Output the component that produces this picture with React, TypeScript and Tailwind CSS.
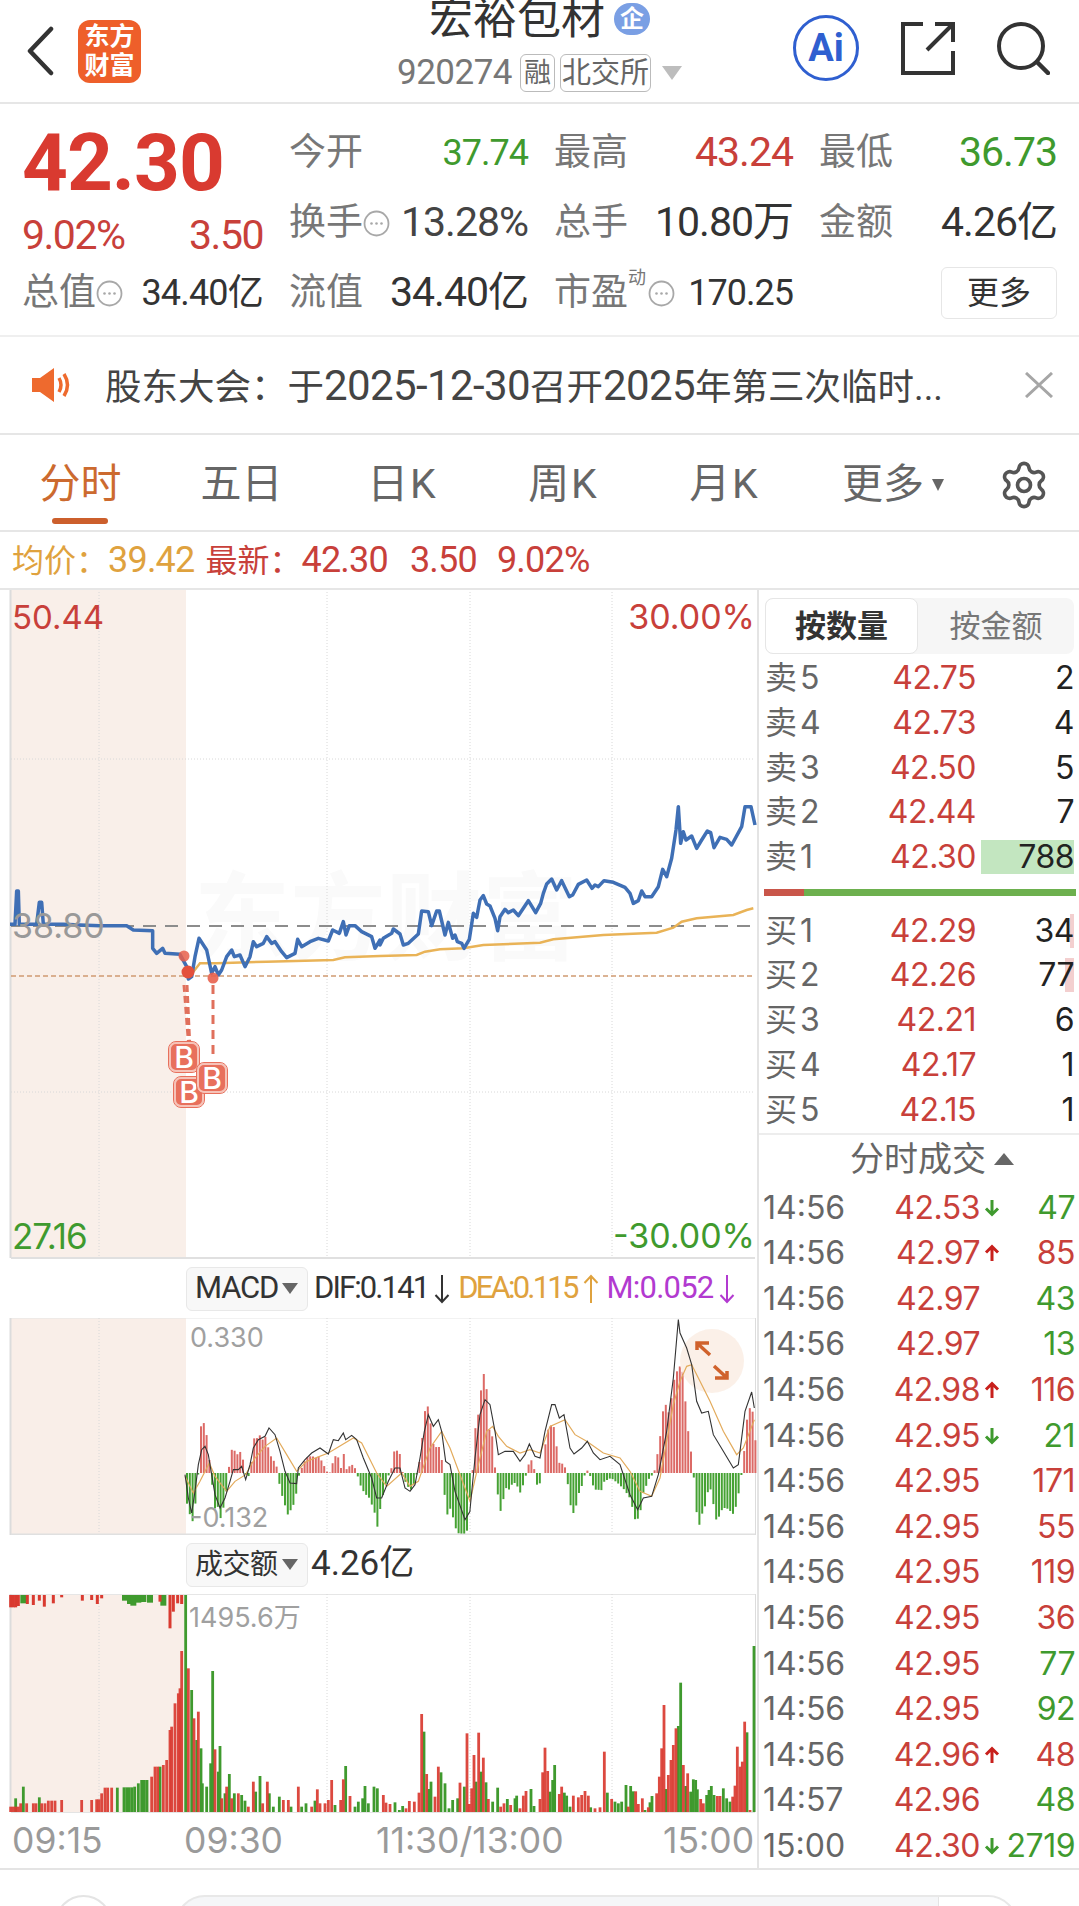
import { Settings } from "lucide-react";

const RED = "#c8403a";
const GREEN = "#3f9a2e";
const GOLD = "#dfa23e";

// traced from the chart, flat x,y pairs at 3x of the crop origin
const toPts = (flat: number[], ox: number, oy: number) => {
  const out: string[] = [];
  for (let i = 0; i < flat.length; i += 2) {
    out.push(`${ox + flat[i] / 3},${oy + flat[i + 1] / 3}`);
  }
  return out.join(" ");
};

const PRICE_A = [30,433,45,433,50,333,55,333,58,433,110,433,118,367,125,367,130,433,160,433,190,433,240,435,300,437,380,437,400,450,458,452,458,505,470,520,488,505,495,520,540,523,560,560,565,597,575,590,585,530,597,475,620,510,635,580,645,560,655,585,665,570,680,530,695,510,703,530,720,525,735,560,750,530,760,485,770,500,790,490,800,470,815,490,825,485,845,515,860,533,885,520,893,478,905,500,930,485,955,475,985,483,998,450,1018,460,1030,425,1038,465,1048,437,1065,437,1085,455,1115,470,1125,505,1140,480];
const PRICE_B = [0,495,10,475,35,460,40,447,60,462,70,495,85,490,115,462,125,393,145,395,155,437,170,393,178,393,195,465,205,427,218,475,225,465,232,485,245,490,252,505,268,478,280,400,290,412,300,360,310,347,320,372,330,378,345,415,353,452,360,410,375,388,385,398,400,390,415,407,445,362,467,398,482,370,490,340,500,312,515,297,530,330,545,302,568,350,578,345,595,313,620,300,636,325,645,315,655,320,672,302,700,307,735,322,750,340,760,370,775,362,785,333,795,350,815,350,835,320,848,268,860,290,875,235,888,150,895,80,902,190,910,155,918,180,935,168,950,205,965,180,982,153,992,158,1002,203,1020,172,1040,178,1055,195,1085,140,1095,80,1113,80,1125,135];
const AVG_A = [580,575,600,550,650,550,800,545,1000,540,1035,532,1140,528];
const AVG_B = [0,528,110,525,135,515,180,508,250,505,310,495,480,488,520,478,670,465,830,458,880,443,905,425,950,415,1060,405,1100,390,1120,385];

const DIF_A = [15,470,25,540,35,585,45,520,55,440,65,395,75,385,85,410,95,470,105,530,120,570,135,540,150,490,160,455,175,455,185,445,197,485,210,440,220,390,235,365,255,355,267,330,285,350,300,400,315,460,330,495,350,497,355,450,375,425,395,405,420,390,445,408,460,365,475,368,490,345,497,365,515,352,530,365,550,420,575,480,590,540,605,540,625,490,645,450,660,450,675,510,690,520,705,500,720,420,733,340,745,290,760,325,775,305,785,340,797,430,810,440,825,520,855,605,870,580];
const DIF_B = [0,575,15,420,30,290,45,245,60,260,75,340,85,410,105,400,130,400,150,430,165,410,178,378,195,415,210,420,225,340,245,260,255,260,268,300,282,290,300,390,312,408,335,390,352,370,370,405,390,425,420,415,450,440,480,530,503,575,520,540,545,535,565,470,590,340,610,180,625,5,630,45,650,90,665,140,680,250,695,285,715,280,730,350,760,400,790,450,805,440,825,280,845,222,853,270];
const DEA_A = [15,475,40,525,60,490,88,435,105,475,140,520,165,490,197,470,225,420,255,385,290,360,320,410,350,460,380,430,445,405,520,360,545,375,590,465,620,505,665,465,690,505,715,490,750,390,785,340,810,390,840,470,870,550];
const DEA_B = [0,550,25,440,50,340,68,325,85,355,110,385,150,405,180,395,210,405,240,325,285,305,315,350,350,370,400,405,450,420,480,460,510,520,545,535,570,480,610,260,630,190,650,145,665,140,690,190,720,250,760,340,800,410,820,390,853,305];

const HIST_A = [15,-80,25,-120,35,-145,45,-80,52,0,55,120,65,160,75,130,85,40,92,0,97,-110,110,-100,120,-140,130,-90,138,-40,140,0,142,10,148,35,155,90,165,50,175,65,182,60,190,20,197,-20,205,-5,210,20,218,105,225,100,235,115,245,100,255,110,265,60,275,40,285,30,290,0,298,-50,310,-90,320,-125,330,-110,340,-90,350,-40,355,0,360,10,375,45,385,50,395,50,405,45,415,50,425,30,435,10,440,0,445,-3,455,30,465,55,473,45,480,15,490,65,497,10,505,20,515,25,525,10,528,0,535,-30,550,-60,565,-75,580,-115,590,-165,600,-90,610,-50,620,-10,630,0,635,60,645,70,655,60,662,45,665,0,670,-20,680,-40,690,-50,700,-30,708,0,712,15,720,60,728,160,735,205,745,195,752,110,760,75,770,80,780,75,785,0,790,-60,800,-130,810,-100,820,-155,830,-180,840,-185,850,-185,860,-170,870,-20];
const HIST_B = [5,10,12,130,20,160,28,235,35,280,40,305,47,250,55,130,62,125,70,50,73,0,78,-30,85,-130,92,-100,98,-75,105,-45,115,-50,125,-30,135,-30,147,-60,155,-40,163,-15,166,0,170,15,178,45,185,30,190,10,192,0,197,-35,205,-35,212,-15,215,0,220,60,228,125,235,135,245,150,252,125,260,50,268,20,275,30,283,15,286,0,290,-30,297,-90,305,-120,312,-120,320,-70,330,-45,338,-25,342,0,350,8,355,0,365,-35,372,-50,382,-50,390,-55,400,-25,420,-15,440,-30,460,-50,470,-65,480,-80,490,-140,497,-135,505,-140,515,-65,525,-40,535,-15,545,-5,550,0,553,30,560,60,567,105,575,180,582,215,590,180,597,185,605,260,612,290,620,310,630,325,638,290,647,160,655,100,662,50,665,0,670,-20,675,-105,683,-160,690,-145,697,-100,705,-100,712,-45,720,-50,735,-140,745,-130,755,-105,765,-105,775,-110,785,-125,795,-100,805,-50,810,-10,813,0,817,35,825,130,832,200,840,190,848,180,855,70];

const histKnots = (() => {
  const k: [number, number][] = [];
  for (let i = 0; i < HIST_A.length; i += 2) k.push([180 + HIST_A[i] / 3, HIST_A[i + 1] / 3]);
  for (let i = 0; i < HIST_B.length; i += 2) k.push([470 + HIST_B[i] / 3, HIST_B[i + 1] / 3]);
  return k;
})();

const histAt = (x: number) => {
  for (let i = 1; i < histKnots.length; i++) {
    if (x <= histKnots[i][0]) {
      const [x0, y0] = histKnots[i - 1];
      const [x1, y1] = histKnots[i];
      return y0 + ((y1 - y0) * (x - x0)) / Math.max(x1 - x0, 0.01);
    }
  }
  return 0;
};

const histBars = Array.from({ length: 204 }, (_, i) => {
  const x = 186 + i * 2.8;
  return { x, h: histAt(x) };
});

// [x at 3x, top at 3x] for volume bars, first crop starts at x=0, second at x=380
const VOL_RED_A = [32,650,40,650,47,650,55,650,62,640,80,640,100,640,108,640,125,640,135,640,145,632,155,632,165,632,185,630,245,630,275,630,290,628,297,628,305,610,315,593,323,593,335,593,455,560,465,530,473,530,490,525,500,510,510,420,515,410,525,340,535,310,540,295,545,183,565,235,582,385,595,365,645,478,665,625,680,590,695,625,715,610,745,650,760,575,788,640,802,575,850,630,865,630,895,590,935,650,952,598,960,640,975,640,985,630,995,570,1022,630,1030,568,1050,618];
const VOL_GREEN_A = [47,625,70,590,118,622,352,593,372,592,380,592,388,592,396,592,404,590,415,580,425,570,433,570,441,570,480,530,557,15,575,300,590,450,603,475,607,580,620,590,632,520,638,243,655,545,660,468,675,610,688,552,703,610,725,615,735,632,767,605,780,558,808,610,820,650,838,620,873,650,905,650,918,640,945,632,1005,645,1037,528,1065,650,1075,635,1088,625,1095,588,1105,640,1122,590,1132,595];
const VOL_RED_B = [10,615,18,638,30,642,78,655,88,633,103,635,117,608,125,372,140,552,165,620,175,530,240,578,261,430,268,642,275,595,282,495,296,428,310,503,325,627,362,650,372,640,392,645,420,655,430,617,438,603,480,627,488,547,495,473,503,543,538,612,545,590,580,617,595,622,605,615,615,603,625,617,645,655,660,652,673,485,695,627,745,650,767,604,775,642,787,625,805,652,830,610,838,560,845,475,852,345,865,555,873,510,880,465,888,415,910,525,923,550,962,627,970,640,1012,618,1020,618,1058,620,1065,587,1072,470,1080,530,1087,515,1094,395,1110,660];
const VOL_GREEN_B = [45,637,58,660,68,648,132,425,147,597,153,575,183,547,195,580,207,655,218,630,233,625,253,590,288,575,303,545,318,577,338,635,353,593,382,627,405,625,410,617,453,597,462,648,510,605,518,570,524,525,553,608,560,617,570,650,632,652,682,608,705,635,715,640,725,635,738,585,752,588,760,604,795,660,810,637,816,618,858,597,895,408,902,278,917,588,932,605,940,568,947,570,952,598,980,615,987,600,994,588,1002,615,1030,595,1040,625,1050,635,1101,427,1122,168];
const VOL_TOP_RED = [32,52,40,52,47,52,55,48,82,42,100,45,118,32,133,50,160,40,185,22,247,32,275,30,292,42,305,25,480,35,510,115,520,65,533,40,545,42];
const VOL_TOP_GREEN = [70,40,375,32,390,42,400,47,415,38,430,36,450,38,490,47];

const pairs = (flat: number[]) => {
  const r: [number, number][] = [];
  for (let i = 0; i < flat.length; i += 2) r.push([flat[i], flat[i + 1]]);
  return r;
};

const depth = [
  { side: "卖", n: 5, price: "42.75", qty: "2", bar: 0, tone: "" },
  { side: "卖", n: 4, price: "42.73", qty: "4", bar: 0, tone: "" },
  { side: "卖", n: 3, price: "42.50", qty: "5", bar: 0, tone: "" },
  { side: "卖", n: 2, price: "42.44", qty: "7", bar: 0, tone: "" },
  { side: "卖", n: 1, price: "42.30", qty: "788", bar: 93, tone: "#c3e6c0" },
];
const depthBuy = [
  { side: "买", n: 1, price: "42.29", qty: "34", bar: 4, tone: "#f3cfcf" },
  { side: "买", n: 2, price: "42.26", qty: "77", bar: 9, tone: "#f3cfcf" },
  { side: "买", n: 3, price: "42.21", qty: "6", bar: 0, tone: "" },
  { side: "买", n: 4, price: "42.17", qty: "1", bar: 0, tone: "" },
  { side: "买", n: 5, price: "42.15", qty: "1", bar: 0, tone: "" },
];

const trades = [
  ["14:56", "42.53", "d", "47", "g"],
  ["14:56", "42.97", "u", "85", "r"],
  ["14:56", "42.97", "", "43", "g"],
  ["14:56", "42.97", "", "13", "g"],
  ["14:56", "42.98", "u", "116", "r"],
  ["14:56", "42.95", "d", "21", "g"],
  ["14:56", "42.95", "", "171", "r"],
  ["14:56", "42.95", "", "55", "r"],
  ["14:56", "42.95", "", "119", "r"],
  ["14:56", "42.95", "", "36", "r"],
  ["14:56", "42.95", "", "77", "g"],
  ["14:56", "42.95", "", "92", "g"],
  ["14:56", "42.96", "u", "48", "r"],
  ["14:57", "42.96", "", "48", "g"],
  ["15:00", "42.30", "d", "2719", "g"],
];

const Dots = () => (
  <svg width="27" height="27" viewBox="0 0 27 27" className="shrink-0">
    <circle cx="13.5" cy="13.5" r="12" fill="none" stroke="#a8a8a8" strokeWidth="1.8" />
    <circle cx="8.5" cy="13.5" r="1.3" fill="#a8a8a8" />
    <circle cx="13.5" cy="13.5" r="1.3" fill="#a8a8a8" />
    <circle cx="18.5" cy="13.5" r="1.3" fill="#a8a8a8" />
  </svg>
);

const ThinArrow = ({ up, color }: { up?: boolean; color: string }) => (
  <svg width="16" height="30" viewBox="0 0 16 30" className="shrink-0">
    {up ? (
      <path d="M8 29V2M1.5 9 8 2l6.5 7" fill="none" stroke={color} strokeWidth="2" />
    ) : (
      <path d="M8 1v27M1.5 21 8 28l6.5-7" fill="none" stroke={color} strokeWidth="2" />
    )}
  </svg>
);

const TickArrow = ({ up }: { up: boolean }) => (
  <svg width="16" height="18" viewBox="0 0 16 18">
    {up ? (
      <path d="M8 17V3M2 8.5 8 2.5l6 6" fill="none" stroke="#c8201c" strokeWidth="3" />
    ) : (
      <path d="M8 1v14M2 9.5l6 6 6-6" fill="none" stroke={GREEN} strokeWidth="3" />
    )}
  </svg>
);

const Caret = ({ color = "#666", w = 16, h = 11, up }: { color?: string; w?: number; h?: number; up?: boolean }) => (
  <svg width={w} height={h} viewBox="0 0 16 11" preserveAspectRatio="none" className="shrink-0">
    <path d={up ? "M0 11h16L8 0z" : "M0 0h16L8 11z"} fill={color} />
  </svg>
);

const Stat = ({ label, value, color, extra, big }: { label: string; value: string; color: string; extra?: React.ReactNode; big?: boolean }) => (
  <div className="flex items-center justify-between h-[70px]">
    <span className="flex items-center text-[#777] text-[37px] whitespace-nowrap">
      {label}
      {extra}
    </span>
    <span
      className={big ? "text-[41px] tracking-[-1px] whitespace-nowrap" : "text-[36px] tracking-[-1px] whitespace-nowrap"}
      style={{ color }}
    >
      {value}
    </span>
  </div>
);

const Badge = ({ cls }: { cls: string }) => (
  <div className={`absolute w-[30px] h-[30px] rounded-[7px] bg-[#e8705c] border-2 border-[#f6c3b8] outline outline-1 outline-[#e8705c] flex items-center justify-center text-white text-[30px] leading-none font-medium ${cls}`}>
    B
  </div>
);

const Dropdown = ({ children }: { children: React.ReactNode }) => (
  <div className="w-[122px] h-[44px] flex items-center justify-between pl-[8px] pr-[9px] bg-[#f8f8f8] border border-[#e8e8e8] rounded-[6px] text-[#333] whitespace-nowrap shrink-0">
    {children}
    <Caret />
  </div>
);

const MainChart = () => (
  <div className="relative h-[669px] overflow-hidden font-[Inter,'Noto_Sans_CJK_SC',sans-serif]">
    <div className="absolute left-[194px] top-[262px] font-bold text-[96px] leading-[130px] text-[#fafafa] whitespace-nowrap">东方财富</div>
    <svg width="757" height="669" viewBox="0 590 757 669" className="relative block">
      <rect x="11" y="590" width="175" height="668" fill="#f9eee8" fillOpacity="0.95" />
      <line x1="10.5" y1="590" x2="10.5" y2="1258" stroke="#dcdcdc" strokeWidth="2" />
      <line x1="11" y1="1258" x2="755" y2="1258" stroke="#e0e0e0" strokeWidth="2" />
      {[99, 327, 470, 612].map((x) => (
        <line key={x} x1={x} y1="592" x2={x} y2="1258" stroke="#d8d8d8" strokeDasharray="1 2" />
      ))}
      {[759, 1092].map((y) => (
        <line key={y} x1="11" y1={y} x2="755" y2={y} stroke="#d8d8d8" strokeDasharray="1 2" />
      ))}
      <line x1="11" y1="926" x2="755" y2="926" stroke="#8c8c8c" strokeWidth="2" strokeDasharray="13 9" />
      <line x1="11" y1="976" x2="755" y2="976" stroke="#d09a72" strokeWidth="1.5" strokeDasharray="5 3" />
      <polyline points={`${toPts(AVG_A, 0, 780)} ${toPts(AVG_B, 380, 780)}`} fill="none" stroke="#e9b357" strokeWidth="2.5" />
      <polyline points={`${toPts(PRICE_A, 0, 780)} ${toPts(PRICE_B, 380, 780)}`} fill="none" stroke="#3f6fb5" strokeWidth="3.5" strokeLinejoin="round" />
      <line x1="184" y1="985" x2="189" y2="1050" stroke="#e0705c" strokeWidth="3" strokeDasharray="7 4" />
      <line x1="187" y1="985" x2="190" y2="1050" stroke="#e0705c" strokeWidth="3" strokeDasharray="7 4" />
      <line x1="213" y1="985" x2="213" y2="1058" stroke="#e0705c" strokeWidth="3" strokeDasharray="9 6" />
      <circle cx="184" cy="956" r="5.5" fill="#e8604c" opacity="0.85" />
      <circle cx="188" cy="972" r="6.5" fill="#e4503c" />
      <circle cx="213" cy="978" r="5.5" fill="#e8604c" opacity="0.9" />
    </svg>
    <span className="absolute left-[12px] top-[6px] text-[33px] leading-[42px] text-[#c8403a]">50.44</span>
    <span className="absolute right-[2px] top-[6px] text-[34px] leading-[42px] text-[#c8403a]">30.00%</span>
    <span className="absolute left-[12px] top-[315px] text-[34px] leading-[42px] text-[#999]">38.80</span>
    <span className="absolute left-[12px] bottom-[2px] text-[35px] leading-[42px] text-[#3f9a2e] tracking-[-1px]">27.16</span>
    <span className="absolute right-[2px] bottom-[2px] text-[34px] leading-[42px] text-[#3f9a2e]">-30.00%</span>
    <Badge cls="left-[169px] top-[452px]" />
    <Badge cls="left-[174px] top-[487px]" />
    <Badge cls="left-[197px] top-[473px]" />
  </div>
);

const MacdChart = () => (
  <div className="relative h-[217px] overflow-hidden font-[Inter,'Noto_Sans_CJK_SC',sans-serif]">
    <svg width="757" height="217" viewBox="0 1318 757 217" className="block">
      <rect x="11" y="1318" width="175" height="217" fill="#f9eee8" />
      <line x1="11" y1="1318" x2="755" y2="1318" stroke="#e6e6e6" />
      <line x1="10.5" y1="1318" x2="10.5" y2="1535" stroke="#dcdcdc" strokeWidth="2" />
      <line x1="755.5" y1="1318" x2="755.5" y2="1535" stroke="#dcdcdc" />
      {[99, 327, 470, 612].map((x) => (
        <line key={x} x1={x} y1="1318" x2={x} y2="1535" stroke="#d8d8d8" strokeDasharray="1 2" />
      ))}
      {histBars.map((b) =>
        Math.abs(b.h) < 0.5 ? null : (
          <rect
            key={b.x}
            x={b.x}
            y={b.h > 0 ? 1473 - b.h : 1473}
            width="2"
            height={Math.abs(b.h)}
            fill={b.h > 0 ? "#dc6a66" : "#46a234"}
          />
        ),
      )}
      <circle cx="712" cy="1361" r="32" fill="#fbeee6" opacity="0.9" />
      <path d="M697 1350v-7h12M698 1344l12 11M727 1371v7h-12M726 1377l-12-11" fill="none" stroke="#d0622c" strokeWidth="3.5" />
      <polyline points={`${toPts(DEA_A, 180, 1318)} ${toPts(DEA_B, 470, 1318)}`} fill="none" stroke="#e3ab5c" strokeWidth="1.2" />
      <polyline points={`${toPts(DIF_A, 180, 1318)} ${toPts(DIF_B, 470, 1318)}`} fill="none" stroke="#333" strokeWidth="1.1" />
      <line x1="11" y1="1534.5" x2="755" y2="1534.5" stroke="#e0e0e0" strokeWidth="2" />
    </svg>
    <span className="absolute left-[190px] top-[2px] text-[27px] leading-[36px] text-[#a0a0a0]">0.330</span>
    <span className="absolute left-[190px] top-[182px] text-[27px] leading-[36px] text-[#a0a0a0]">-0.132</span>
  </div>
);

const VolumeChart = () => (
  <div className="relative h-[219px] overflow-hidden font-[Inter,'Noto_Sans_CJK_SC',sans-serif]">
    <svg width="757" height="219" viewBox="0 1594 757 219" className="block">
      <rect x="11" y="1594" width="175" height="218" fill="#f9eee8" />
      <line x1="11" y1="1594.5" x2="755" y2="1594.5" stroke="#e6e6e6" />
      <line x1="10.5" y1="1594" x2="10.5" y2="1812" stroke="#dcdcdc" strokeWidth="2" />
      <line x1="755.5" y1="1594" x2="755.5" y2="1812" stroke="#dcdcdc" />
      {[99, 327, 470, 612].map((x) => (
        <line key={x} x1={x} y1="1594" x2={x} y2="1812" stroke="#d8d8d8" strokeDasharray="1 2" />
      ))}
      {pairs(VOL_GREEN_A).map(([x, t]) => (
        <rect key={`ga${x}`} x={x / 3 - 1.4} y={1590 + t / 3} width="2.8" height={1812 - 1590 - t / 3} fill="#3f9a2e" />
      ))}
      {pairs(VOL_RED_A).map(([x, t]) => (
        <rect key={`ra${x}`} x={x / 3 - 1.4} y={1590 + t / 3} width="2.8" height={1812 - 1590 - t / 3} fill="#d93a30" opacity="0.92" />
      ))}
      {pairs(VOL_GREEN_B).map(([x, t]) => (
        <rect key={`gb${x}`} x={380 + x / 3 - 1.4} y={1590 + t / 3} width="2.8" height={1812 - 1590 - t / 3} fill="#3f9a2e" />
      ))}
      {pairs(VOL_RED_B).map(([x, t]) => (
        <rect key={`rb${x}`} x={380 + x / 3 - 1.4} y={1590 + t / 3} width="2.8" height={1812 - 1590 - t / 3} fill="#d93a30" opacity="0.92" />
      ))}
      {pairs(VOL_TOP_GREEN).map(([x, b]) => (
        <rect key={`tg${x}`} x={x / 3 - 3} y="1595" width="6" height={b / 3 - 5} fill="#3f9a2e" />
      ))}
      {pairs(VOL_TOP_RED).map(([x, b]) => (
        <rect key={`tr${x}`} x={x / 3 - 1.5} y="1595" width="3" height={b / 3 - 5} fill="#d93a30" />
      ))}
      <line x1="11" y1="1812.5" x2="755" y2="1812.5" stroke="#e4e4e4" />
    </svg>
    <span className="absolute left-[189px] top-[6px] text-[27px] leading-[36px] text-[#a0a0a0]">1495.6万</span>
  </div>
);

const DepthRow = ({ row }: { row: (typeof depth)[number] }) => (
  <div className="flex items-center h-[44.7px] pl-[6px] pr-[5px]">
    <span className="w-[60px] flex items-center gap-[3px] text-[#666] text-[32px] whitespace-nowrap">
      {row.side}
      <span>{row.n}</span>
    </span>
    <span className="w-[151px] text-right text-[#c8403a] text-[32px] tracking-[-0.5px]">{row.price}</span>
    <span className="relative flex-1 h-[34px] flex items-center justify-end text-[#222] text-[32px] tracking-[-0.5px]">
      {row.bar > 0 && <span className="absolute right-0 top-0 h-full" style={{ width: row.bar, background: row.tone }} />}
      <span className="relative">{row.qty}</span>
    </span>
  </div>
);

export default function App() {
  return (
    <div className="relative w-[1079px] h-[1906px] overflow-hidden bg-white font-[Roboto,'Noto_Sans_CJK_SC',sans-serif]">
      {/* title bar */}
      <header className="flex h-[104px] border-b-2 border-[#e6e6e6]">
        <div className="w-[286px] flex items-center pl-[26px] gap-[24px]">
          <svg width="28" height="50" viewBox="0 0 28 50">
            <path d="M25 3 4 25l21 22" fill="none" stroke="#333" strokeWidth="4.5" strokeLinecap="round" strokeLinejoin="round" />
          </svg>
          <div className="w-[63px] h-[63px] rounded-[12px] bg-[#ee5f2a] flex flex-col items-center justify-center text-white font-bold text-[25px] leading-[29px]">
            <span>东方</span>
            <span>财富</span>
          </div>
        </div>
        <div className="flex-1 flex flex-col items-center">
          <div className="flex items-center h-[38px]">
            <span className="text-[#333] text-[44px] leading-[38px] whitespace-nowrap">宏裕包材</span>
            <span className="ml-[9px] w-[36px] h-[32px] rounded-full bg-[#7a9fe4] text-white text-[24px] font-bold leading-[32px] text-center">企</span>
          </div>
          <div className="flex items-center h-[38px] mt-[16px]">
            <span className="text-[#777] text-[35px] tracking-[-0.5px] mr-[8px]">920274</span>
            <span className="h-[38px] w-[35px] border border-[#bbb] rounded-[6px] text-[#666] text-[27px] leading-[36px] text-center">融</span>
            <span className="h-[38px] w-[91px] ml-[5px] border border-[#bbb] rounded-[6px] text-[#666] text-[29px] leading-[36px] text-center whitespace-nowrap">北交所</span>
            <span className="ml-[11px]">
              <Caret color="#bdbdbd" w={20} h={14} />
            </span>
          </div>
        </div>
        <div className="w-[286px] flex items-center gap-[42px] pb-[6px] pr-[27px]">
          <div className="w-[66px] h-[66px] rounded-full border-[3.5px] border-[#2f5fd0] flex items-center justify-center text-[#2f5fd0] font-bold text-[38px] leading-none">Ai</div>
          <svg width="54" height="54" viewBox="0 0 54 54">
            <path d="M22 3H2v49h50V30M34 3h18v18M52 3 26 29" fill="none" stroke="#333" strokeWidth="4" />
          </svg>
          <svg width="54" height="54" viewBox="0 0 54 54" className="-ml-[1px]">
            <circle cx="25" cy="25" r="22" fill="none" stroke="#333" strokeWidth="4" />
            <path d="M41 41l11 11" stroke="#333" strokeWidth="4.5" strokeLinecap="round" />
          </svg>
        </div>
      </header>

      {/* quote */}
      <section className="h-[233px] border-b-2 border-[#efefef] pt-[14px] pl-[22px] pr-[24px]">
        <div className="grid grid-cols-[241px_239px_239px_238px] gap-x-[26px]">
          <div className="row-span-2 flex flex-col">
            <span className="text-[#d93a30] text-[80px] leading-[90px] font-bold tracking-[-1px]">42.30</span>
            <div className="flex justify-between text-[#c8403a] text-[41px] leading-[40px] tracking-[-1.5px] mt-[7px]">
              <span>9.02%</span>
              <span>3.50</span>
            </div>
          </div>
          <Stat label="今开" value="37.74" color={GREEN} />
          <Stat label="最高" value="43.24" color={RED} big />
          <Stat label="最低" value="36.73" color={GREEN} big />
          <Stat label="换手" value="13.28%" color="#444" extra={<Dots />} big />
          <Stat label="总手" value="10.80万" color="#333" big />
          <Stat label="金额" value="4.26亿" color="#333" big />
          <div className="flex items-center justify-between h-[70px]">
            <span className="flex items-center text-[#777] text-[37px]">
              总值
              <Dots />
            </span>
            <span className="text-[#333] text-[36px] tracking-[-0.8px] whitespace-nowrap">34.40亿</span>
          </div>
          <Stat label="流值" value="34.40亿" color="#333" big />
          <Stat
            label="市盈"
            value="170.25"
            color="#333"
            extra={
              <span className="flex items-center">
                <span className="text-[18px] leading-none -mt-[30px] w-[20px]">动</span>
                <Dots />
              </span>
            }
          />
          <div className="flex items-center justify-end h-[70px]">
            <div className="w-[116px] h-[52px] border border-[#e6e6e6] rounded-[6px] flex items-center justify-center text-[#333] text-[32px]">更多</div>
          </div>
        </div>
      </section>

      {/* notice */}
      <section className="flex items-center h-[98px] border-b-2 border-[#e6e6e6] pl-[32px] pr-[26px]">
        <svg width="42" height="36" viewBox="0 0 42 36" className="shrink-0">
          <path d="M0 11h8L22 1v34L8 25H0z" fill="#ee6a2e" />
          <path d="M27 11q4 7 0 14M32 7q7 11 0 22" fill="none" stroke="#ee6a2e" strokeWidth="3.5" />
        </svg>
        <span className="ml-[31px] text-[#444] text-[36.5px] whitespace-nowrap">
          股东大会：于<span className="text-[42px] tracking-[-0.6px]">2025-12-30</span>召开<span className="text-[42px] tracking-[-0.6px]">2025</span>年第三次临时...
        </span>
        <svg width="28" height="26" viewBox="0 0 28 26" className="ml-auto shrink-0">
          <path d="M1 1l26 24M27 1 1 25" stroke="#a6a6a6" strokeWidth="3" />
        </svg>
      </section>

      {/* tabs */}
      <nav className="relative grid grid-cols-[161px_161px_161px_161px_161px_176px_1fr] items-center h-[97px] pt-[4px] border-b-2 border-[#e6e6e6] text-[41px] text-[#666] text-center">
        <span className="text-[#cc6a2f]">分时</span>
        <span>五日</span>
        <span className="tracking-[2px]">日K</span>
        <span className="tracking-[2px]">周K</span>
        <span className="tracking-[2px]">月K</span>
        <span className="flex items-center justify-center gap-[8px]">
          更多
          <Caret w={12} h={12} />
        </span>
        <span className="flex items-center pl-[17px]">
          <Settings size={52} strokeWidth={1.7} color="#555" />
        </span>
        <span className="absolute left-[52px] bottom-[6px] w-[56px] h-[6px] rounded-[3px] bg-[#cc5f2c]" />
      </nav>

      {/* average line legend */}
      <div className="flex items-center h-[58px] border-b-2 border-[#e6e6e6] pl-[12px] text-[32px] whitespace-nowrap">
        <span style={{ color: GOLD }}>
          均价：<span className="text-[36px] tracking-[-0.8px]">39.42</span>
        </span>
        <span className="ml-[11px]" style={{ color: RED }}>
          最新：<span className="text-[36px] tracking-[-0.8px]">42.30</span>
        </span>
        <span className="ml-[22px] text-[36px] tracking-[-0.8px]" style={{ color: RED }}>3.50</span>
        <span className="ml-[20px] text-[36px] tracking-[-0.8px]" style={{ color: RED }}>9.02%</span>
      </div>

      <div className="flex h-[1280px] border-b-2 border-[#e4e4e4]">
        {/* charts */}
        <div className="w-[757px] shrink-0">
          <MainChart />
          <div className="flex items-center h-[59px] pl-[186px] gap-[6px] text-[31px] whitespace-nowrap">
            <Dropdown>
              <span className="text-[31px] tracking-[-1.2px]">MACD</span>
            </Dropdown>
            <span className="text-[#333] tracking-[-1.9px]">DIF:0.141</span>
            <ThinArrow color="#333" />
            <span className="text-[#dfa23e] ml-[2px] tracking-[-2.8px]">DEA:0.115</span>
            <ThinArrow up color="#dfa23e" />
            <span className="text-[#b23ad0] ml-[2px] tracking-[-0.8px]">M:0.052</span>
            <ThinArrow color="#b23ad0" />
          </div>
          <MacdChart />
          <div className="flex items-center h-[59px] pl-[186px] gap-[3px]">
            <Dropdown>
              <span className="text-[28px] tracking-[-0.5px]">成交额</span>
            </Dropdown>
            <span className="text-[#333] text-[35px]">4.26亿</span>
          </div>
          <VolumeChart />
          <div className="grid grid-cols-[172px_192px_287px_90px] items-center h-[55px] pl-[12px] text-[#9a9a9a] text-[35.5px] whitespace-nowrap font-[Inter,'Noto_Sans_CJK_SC',sans-serif]">
            <span>09:15</span>
            <span>09:30</span>
            <span>11:30/13:00</span>
            <span>15:00</span>
          </div>
        </div>

        {/* order book */}
        <aside className="flex-1 border-l-2 border-[#e4e4e4] font-[Inter,'Noto_Sans_CJK_SC',sans-serif]">
          <div className="flex h-[56px] mt-[8px] ml-[6px] mr-[5px] bg-[#f6f6f6] rounded-[8px] text-[31px]">
            <span className="w-[153px] border border-[#e6e6e6] bg-white rounded-[8px] flex items-center justify-center text-[#333] font-bold">按数量</span>
            <span className="flex-1 flex items-center justify-center text-[#777]">按金额</span>
          </div>
          <div className="mt-[2px]">
            {depth.map((row) => (
              <DepthRow key={row.n} row={row} />
            ))}
          </div>
          <div className="flex h-[7px] mt-[10px] mb-[12px] ml-[5px] mr-[3px]">
            <div className="w-[40px] bg-[#c9564a]" />
            <div className="flex-1 bg-[#6db04e]" />
          </div>
          <div>
            {depthBuy.map((row) => (
              <DepthRow key={row.n} row={row} />
            ))}
          </div>
          <div className="flex items-center justify-center gap-[8px] pl-[26px] h-[50px] mt-[1px] border-t-2 border-[#ededed] text-[#666] text-[34px]">
            分时成交
            <Caret w={20} h={12} color="#666" up />
          </div>
          <div className="mt-[2px]">
            {trades.map((t, i) => (
              <div key={i} className="flex items-center h-[45.6px] pl-[4px] pr-[4px]">
                <span className="w-[100px] text-[#666] text-[32px]">{t[0]}</span>
                <span className="w-[117px] text-right text-[#c8403a] text-[32px] tracking-[-0.5px]">{t[1]}</span>
                <span className="w-[20px] flex justify-end">
                  {t[2] && <TickArrow up={t[2] === "u"} />}
                </span>
                <span className={`flex-1 text-right text-[32px] tracking-[-0.5px] ${t[4] === "g" ? "text-[#3f9a2e]" : "text-[#c8403a]"}`}>{t[3]}</span>
              </div>
            ))}
          </div>
        </aside>
      </div>

      {/* comment bar, cut off by the page edge */}
      <div className="flex pt-[25px] pl-[55px]">
        <div className="w-[57px] h-[57px] rounded-full border-2 border-[#e4e4e4] shrink-0" />
        <div className="ml-[63px] w-[843px] h-[60px] rounded-[30px] border-2 border-[#e8e8e8] bg-[#f5f6f8] flex">
          <div className="ml-[761px] w-[80px] h-full bg-white rounded-r-[30px] border-l border-[#e4e4e4]" />
        </div>
      </div>
    </div>
  );
}
